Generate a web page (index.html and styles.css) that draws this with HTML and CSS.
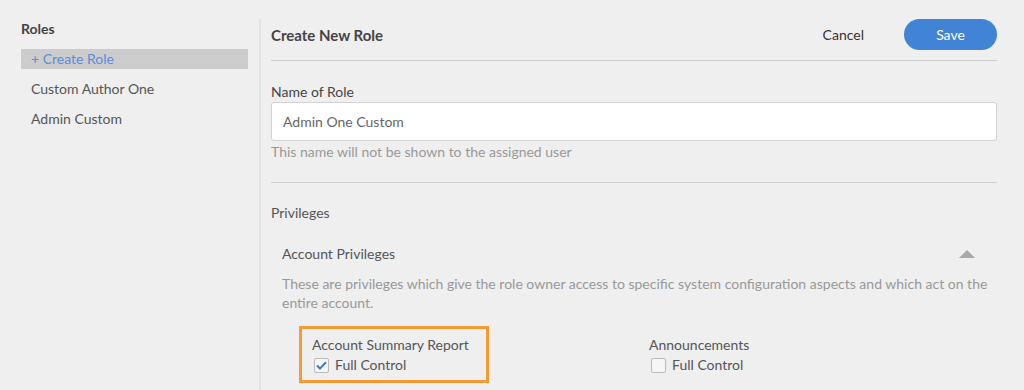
FILE: index.html
```html
<!DOCTYPE html>
<html lang="en">
<head>
    <meta charset="UTF-8">
    <meta name="viewport" content="width=device-width, initial-scale=1.0">
    <title>Create New Role</title>
    <link rel="stylesheet" href="styles.css">
</head>
<body>
    <div class="app">
        <aside class="sidebar">
            <h2 class="sidebar-title">Roles</h2>
            <ul class="role-list">
                <li class="role-item active">+ Create Role</li>
                <li class="role-item">Custom Author One</li>
                <li class="role-item">Admin Custom</li>
            </ul>
        </aside>

        <main class="main">
            <div class="header">
                <h1 class="title">Create New Role</h1>
                <div class="actions">
                    <button class="btn-link">Cancel</button>
                    <button class="btn-primary">Save</button>
                </div>
            </div>

            <div class="field">
                <label class="field-label" for="role-name">Name of Role</label>
                <input class="text-input" id="role-name" type="text" value="Admin One Custom">
                <div class="help">This name will not be shown to the assigned user</div>
            </div>

            <div class="section">
                <div class="section-title">Privileges</div>

                <div class="group-head">
                    <span>Account Privileges</span>
                    <span class="caret-up"></span>
                </div>
                <p class="group-desc">These are privileges which give the role owner access to specific system configuration aspects and which act on the entire account.</p>

                <div class="perm-grid">
                    <div class="perm highlight">
                        <div class="perm-name">Account Summary Report</div>
                        <label class="check">
                            <span class="box checked">
                                <svg width="11" height="9" viewBox="0 0 11 9"><path d="M1 4.5 L4 7.5 L10 1.2" fill="none" stroke="#3b7bd4" stroke-width="2"/></svg>
                            </span>
                            Full Control
                        </label>
                    </div>
                    <div class="perm">
                        <div class="perm-name">Announcements</div>
                        <label class="check">
                            <span class="box"></span>
                            Full Control
                        </label>
                    </div>
                </div>
            </div>
        </main>
    </div>
</body>
</html>
```

FILE: styles.css
```css
body {
    margin: 0;
    background: #efefef;
    font-family: Lato, "Open Sans", sans-serif;
    font-size: 14px;
    color: #555;
}
.app {
    display: flex;
    height: 390px;
    overflow: hidden;
}
.sidebar {
    width: 227px;
    flex-shrink: 0;
    margin-top: 19px;
    padding: 0 11px 0 21px;
    border-right: 2px solid #e2e2e2;
}
.sidebar-title {
    margin: 0 0 10px;
    font-size: 14px;
    line-height: 20px;
    font-weight: bold;
    color: #444;
}
.role-list {
    list-style: none;
    margin: 0;
    padding: 0;
}
.role-item {
    height: 20px;
    line-height: 20px;
    padding-left: 10px;
    margin-bottom: 10px;
    color: #555;
}
.role-item.active {
    background: #cccccc;
    color: #5a8ddb;
}
.main {
    flex: 1;
    padding: 0 27px 0 10px;
}
.header {
    display: flex;
    align-items: center;
    justify-content: space-between;
    padding: 19px 0 10px;
    border-bottom: 1px solid #cfcfcf;
}
.title {
    margin: 0;
    font-size: 15px;
    font-weight: bold;
    color: #444;
}
.actions {
    display: flex;
    align-items: center;
}
.btn-link {
    background: none;
    border: none;
    font-family: inherit;
    font-size: 14px;
    color: #333;
    margin-right: 34px;
    cursor: pointer;
}
.btn-primary {
    width: 93px;
    height: 31px;
    border: none;
    border-radius: 16px;
    background: #4184d5;
    color: white;
    font-family: inherit;
    font-size: 14px;
    cursor: pointer;
}
.field {
    padding: 21px 0 20px;
    border-bottom: 1px solid #cfcfcf;
}
.field-label {
    display: block;
    line-height: 20px;
    color: #444;
}
.text-input {
    display: block;
    width: 100%;
    box-sizing: border-box;
    height: 39px;
    padding: 0 11px;
    border: 1px solid #d3d3d3;
    border-radius: 3px;
    background: white;
    font-family: inherit;
    font-size: 14px;
    color: #666;
}
.help {
    line-height: 20px;
    margin-top: 1px;
    color: #999;
}
.section {
    padding-top: 20px;
}
.section-title {
    line-height: 20px;
    color: #555;
}
.group-head {
    display: flex;
    justify-content: space-between;
    align-items: center;
    margin-top: 21px;
    padding: 0 22px 0 11px;
    line-height: 20px;
    color: #555;
}
.caret-up {
    width: 0;
    height: 0;
    border-left: 8px solid transparent;
    border-right: 8px solid transparent;
    border-bottom: 8px solid #a8a8a8;
}
.group-desc {
    margin: 10px 0 0;
    padding: 0 0 0 11px;
    line-height: 19px;
    color: #999;
}
.perm-grid {
    display: grid;
    grid-template-columns: 337px 1fr;
    margin-top: 14px;
    padding-left: 28px;
}
.perm {
    width: 190px;
    box-sizing: border-box;
    padding: 6px 10px 5px;
    border: 3px solid transparent;
}
.perm.highlight {
    border-color: #f89a34;
}
.perm-name {
    line-height: 20px;
    color: #555;
}
.check {
    display: flex;
    align-items: center;
    line-height: 20px;
    color: #555;
}
.box {
    display: inline-flex;
    align-items: center;
    justify-content: center;
    width: 13px;
    height: 13px;
    margin: 0 6px 0 2px;
    border: 1px solid #bbb;
    border-radius: 2px;
    background: #f6f6f6;
}
```
